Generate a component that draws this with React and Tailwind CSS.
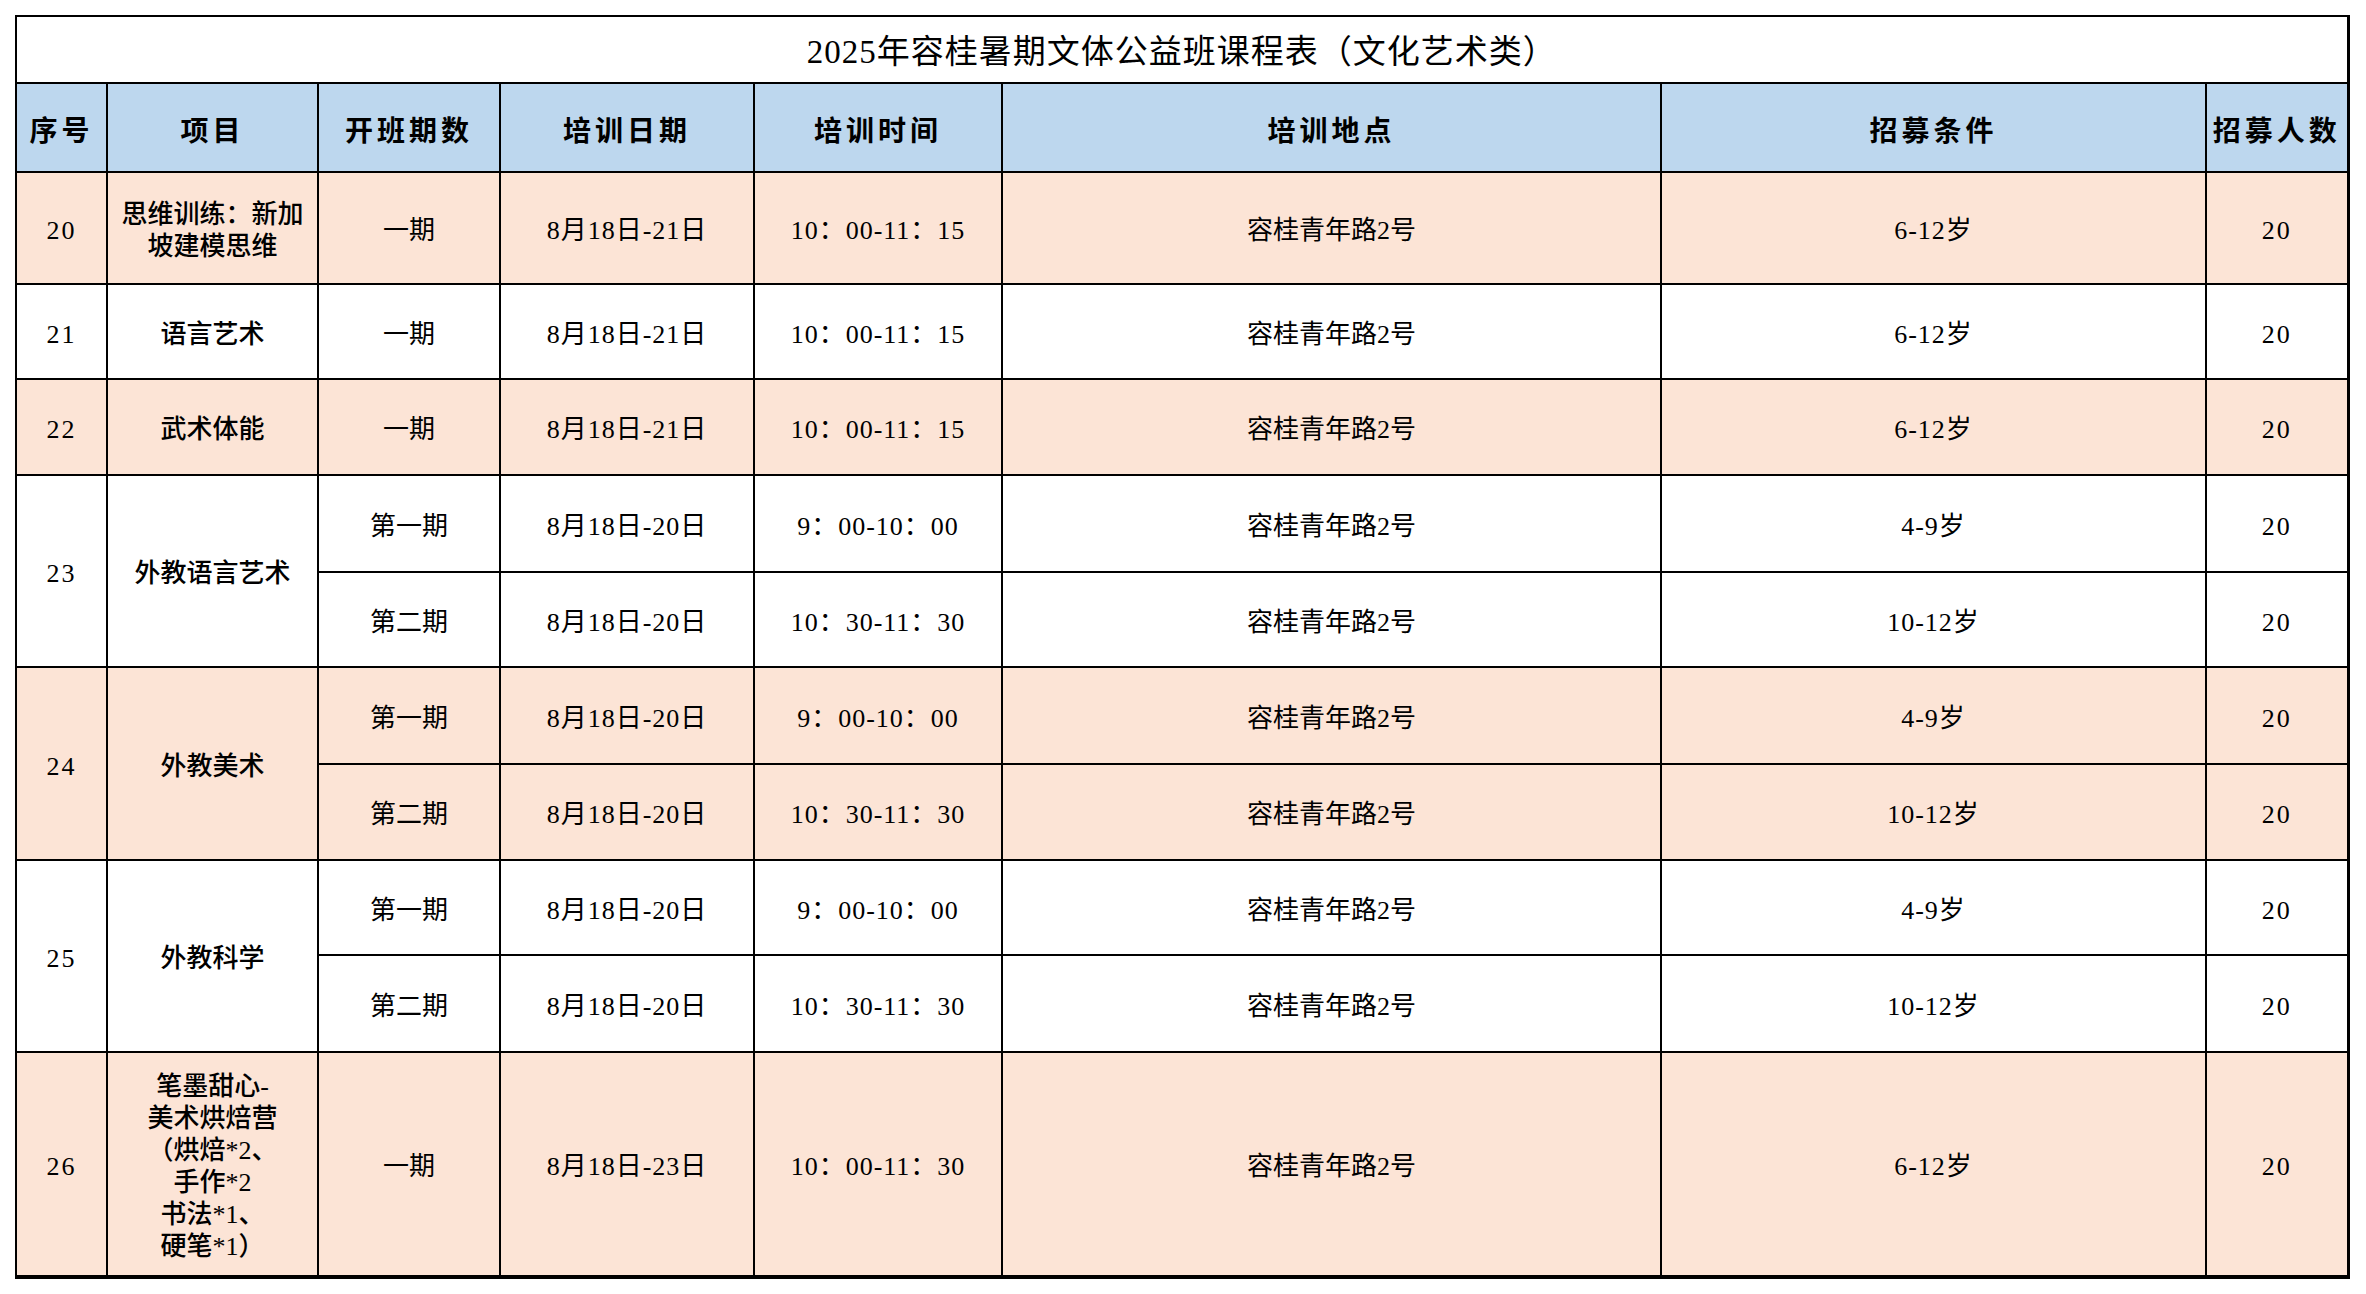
const font = "font-['Liberation_Serif','Noto_Sans_CJK_SC',serif]";

const headers = ["序号", "项目", "开班期数", "培训日期", "培训时间", "培训地点", "招募条件", "招募人数"];
const colWidths = ["w-[91px]", "w-[211px]", "w-[182px]", "w-[254px]", "w-[248px]", "w-[659px]", "w-[545px]", "w-[142px]"];

// each course: one or more sessions; pink = shaded row
const courses = [
  { no: "20", name: ["思维训练：新加", "坡建模思维"], pink: true, h: ["h-[112px]"],
    sessions: [["一期", "8月18日-21日", "10：00-11：15", "6-12岁"]] },
  { no: "21", name: ["语言艺术"], pink: false, h: ["h-[95px]"],
    sessions: [["一期", "8月18日-21日", "10：00-11：15", "6-12岁"]] },
  { no: "22", name: ["武术体能"], pink: true, h: ["h-[96px]"],
    sessions: [["一期", "8月18日-21日", "10：00-11：15", "6-12岁"]] },
  { no: "23", name: ["外教语言艺术"], pink: false, h: ["h-[97px]", "h-[95px]"],
    sessions: [
      ["第一期", "8月18日-20日", "9：00-10：00", "4-9岁"],
      ["第二期", "8月18日-20日", "10：30-11：30", "10-12岁"],
    ] },
  { no: "24", name: ["外教美术"], pink: true, h: ["h-[97px]", "h-[96px]"],
    sessions: [
      ["第一期", "8月18日-20日", "9：00-10：00", "4-9岁"],
      ["第二期", "8月18日-20日", "10：30-11：30", "10-12岁"],
    ] },
  { no: "25", name: ["外教科学"], pink: false, h: ["h-[95px]", "h-[97px]"],
    sessions: [
      ["第一期", "8月18日-20日", "9：00-10：00", "4-9岁"],
      ["第二期", "8月18日-20日", "10：30-11：30", "10-12岁"],
    ] },
  { no: "26", name: ["笔墨甜心-", "美术烘焙营", "（烘焙*2、", "手作*2", "书法*1、", "硬笔*1）"], pink: true, h: ["h-[225px]"],
    sessions: [["一期", "8月18日-23日", "10：00-11：30", "6-12岁"]] },
];

const cell = "border-2 border-black text-center align-middle px-0 pb-0";
const data = `${cell} pt-[6px]`;
// digits in the sheet run a bit wider than Liberation Serif
const num = `${data} tracking-[1px]`;

export default function App() {
  return (
    <div className={`min-h-screen bg-white pt-[15px] pl-[15px] text-black ${font}`}>
      <table className="table-fixed border-collapse border-2 border-r-[3px] border-b-4 border-black">
        <colgroup>
          {colWidths.map((w, i) => (
            <col key={i} className={w} />
          ))}
        </colgroup>
        <tbody>
          <tr className="h-[67px]">
            <td colSpan={8} className={`${cell} pt-[6px] text-[33px] tracking-[1px] leading-none`}>
              2025年容桂暑期文体公益班课程表（文化艺术类）
            </td>
          </tr>
          <tr className="h-[89px] bg-[#bdd7ee]">
            {headers.map((h) => (
              <td key={h} className={`${cell} pt-[8px] text-[28px] font-bold tracking-[4px] leading-none`}>
                {h}
              </td>
            ))}
          </tr>
          {courses.map((c) =>
            c.sessions.map((s, i) => (
              <tr key={c.no + i} className={`${c.h[i]} ${c.pink ? "bg-[#fce4d6]" : "bg-white"} text-[26px] leading-[32px]`}>
                {i === 0 && (
                  <>
                    <td rowSpan={c.sessions.length} className={`${num} tracking-[2px]`}>{c.no}</td>
                    <td rowSpan={c.sessions.length} className={`${data} font-medium`}>
                      {c.name.map((line) => (
                        <div key={line}>{line}</div>
                      ))}
                    </td>
                  </>
                )}
                <td className={data}>{s[0]}</td>
                <td className={num}>{s[1]}</td>
                <td className={num}>{s[2]}</td>
                <td className={data}>容桂青年路2号</td>
                <td className={num}>{s[3]}</td>
                <td className={`${num} tracking-[2px]`}>20</td>
              </tr>
            ))
          )}
        </tbody>
      </table>
    </div>
  );
}
